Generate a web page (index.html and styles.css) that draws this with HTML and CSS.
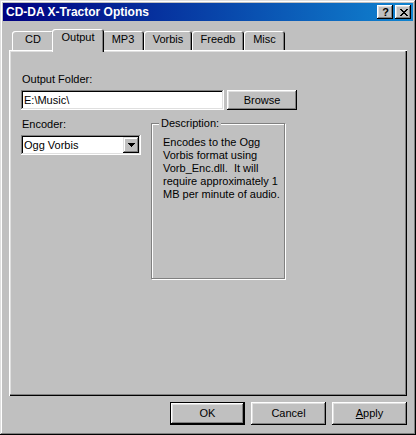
FILE: index.html
```html
<!DOCTYPE html>
<html>
<head>
<meta charset="utf-8">
<title>CD-DA X-Tractor Options</title>
<link rel="stylesheet" href="styles.css">
</head>
<body>
<div class="window">
  <div class="titlebar">
    <span class="title">CD-DA X-Tractor Options</span>
    <div class="caption-buttons">
      <div class="cap-btn help">?</div>
      <div class="cap-btn close">
        <svg width="8" height="7" viewBox="0 0 8 7">
          <path d="M0 0h2v1h1v1h2v-1h1v-1h2v1h-1v1h-1v1h-1v1h1v1h1v1h1v1h-2v-1h-1v-1h-2v1h-1v1h-2v-1h1v-1h1v-1h1v-1h-1v-1h-1v-1h-1z" fill="#000"/>
        </svg>
      </div>
    </div>
  </div>
  <div class="content">
    <div class="tabs">
      <div class="tab w-cd">CD</div>
      <div class="tab active w-output">Output</div>
      <div class="tab w-mp3">MP3</div>
      <div class="tab w-vorbis">Vorbis</div>
      <div class="tab w-freedb">Freedb</div>
      <div class="tab w-misc">Misc</div>
    </div>
    <div class="panel">
      <div class="label">Output Folder:</div>
      <div class="folder-row">
        <div class="field folder">E:\Music\</div>
        <div class="button browse">Browse</div>
      </div>
      <div class="cols">
        <div class="encoder-col">
          <div class="label encoder-label">Encoder:</div>
          <div class="field combo">
            <span class="combo-text">Ogg Vorbis</span>
            <div class="drop">
              <svg width="7" height="4" viewBox="0 0 7 4"><path d="M0 0h7v1h-1v1h-1v1h-1v1h-1v-1h-1v-1h-1v-1h-1z" fill="#000"/></svg>
            </div>
          </div>
        </div>
        <div class="group">
          <div class="legend">Description:</div>
          <p class="desc">Encodes to the Ogg<br>Vorbis format using<br>Vorb_Enc.dll.&nbsp; It will<br>require approximately 1<br>MB per minute of audio.</p>
        </div>
      </div>
    </div>
    <div class="footer">
      <div class="button default">OK</div>
      <div class="button">Cancel</div>
      <div class="button"><u>A</u>pply</div>
    </div>
  </div>
</div>
</body>
</html>
```

FILE: styles.css
```css
html, body {
  margin: 0;
  padding: 0;
  background: #c0c0c0;
}

body {
  font-family: "Liberation Sans", Arial, sans-serif;
  font-size: 11px;
  line-height: 13px;
  color: #000;
}

.window {
  width: 416px;
  height: 435px;
  box-sizing: border-box;
  padding: 3px;
  background: #c0c0c0;
  box-shadow: inset -1px -1px #000, inset 1px 1px #dfdfdf, inset -2px -2px #808080, inset 2px 2px #fff;
}

.titlebar {
  height: 18px;
  display: flex;
  align-items: center;
  justify-content: space-between;
  padding: 0 2px 0 3px;
  background: linear-gradient(90deg, #000080 0%, #1084d0 100%);
}

.title {
  color: #fff;
  font-weight: bold;
  font-size: 12px;
  line-height: 18px;
}

.caption-buttons {
  display: flex;
  gap: 2px;
}

.cap-btn {
  width: 16px;
  height: 14px;
  box-sizing: border-box;
  background: #c0c0c0;
  box-shadow: inset -1px -1px #000, inset 1px 1px #fff, inset -2px -2px #808080, inset 2px 2px #dfdfdf;
  display: flex;
  align-items: center;
  justify-content: center;
}

.cap-btn.help {
  font-weight: bold;
  font-size: 11px;
  line-height: 14px;
  padding-left: 1px;
}

.cap-btn.close svg {
  display: block;
  margin-left: 1px;
}

.content {
  padding: 8px 3px 0 6px;
}

.tabs {
  display: flex;
  align-items: flex-end;
  height: 21px;
  padding-left: 3px;
}

.tab {
  position: relative;
  box-sizing: border-box;
  height: 19px;
  padding-top: 2px;
  text-align: center;
  border-radius: 3px 3px 0 0;
  background: #c0c0c0;
  box-shadow: inset 1px 1px #fff, inset -1px 0 #000, inset -2px 0 #808080;
}

.tab.active {
  height: 23px;
  margin: 0 -2px -2px -2px;
  padding-top: 2px;
  z-index: 1;
}

.w-cd { width: 42px; }
.w-output { width: 52px; }
.w-mp3 { width: 42px; }
.w-vorbis { width: 48px; }
.w-freedb { width: 52px; }
.w-misc { width: 41px; }

.panel {
  width: 398px;
  height: 346px;
  box-sizing: border-box;
  padding: 23px 11px 0 12px;
  box-shadow: inset 1px 1px #fff, inset -1px -1px #000, inset -2px -2px #808080, inset 2px 2px #dfdfdf;
}

.label {
  margin-left: 1px;
}

.folder-row {
  display: flex;
  gap: 3px;
  margin-top: 4px;
}

.field {
  box-sizing: border-box;
  background: #fff;
  box-shadow: inset -1px -1px #fff, inset 1px 1px #808080, inset -2px -2px #dfdfdf, inset 2px 2px #000;
}

.folder {
  width: 203px;
  height: 20px;
  padding: 4px 0 0 3px;
}

.button {
  box-sizing: border-box;
  width: 75px;
  height: 23px;
  display: flex;
  align-items: center;
  justify-content: center;
  background: #c0c0c0;
  box-shadow: inset -1px -1px #000, inset 1px 1px #fff, inset -2px -2px #808080, inset 2px 2px #dfdfdf;
}

.button.browse {
  width: 70px;
  height: 20px;
}

.button.default {
  box-shadow: inset 0 0 0 1px #000, inset -2px -2px #000, inset 2px 2px #fff, inset -3px -3px #808080, inset 3px 3px #dfdfdf;
}

.cols {
  display: flex;
  align-items: flex-start;
  gap: 10px;
  margin-top: 8px;
}

.encoder-col {
  width: 120px;
}

.combo {
  width: 120px;
  height: 20px;
  margin-top: 4px;
  display: flex;
  align-items: center;
  justify-content: space-between;
  padding: 2px 2px 2px 3px;
}

.combo-text {
  line-height: 13px;
}

.drop {
  width: 16px;
  height: 16px;
  box-sizing: border-box;
  background: #c0c0c0;
  display: flex;
  align-items: center;
  justify-content: center;
  box-shadow: inset -1px -1px #000, inset 1px 1px #dfdfdf, inset -2px -2px #808080, inset 2px 2px #fff;
}

.drop svg {
  display: block;
}

.group {
  width: 134px;
  height: 156px;
  box-sizing: border-box;
  margin-top: 5px;
  border: 1px solid #808080;
  box-shadow: inset 1px 1px #fff, 1px 1px #fff;
}

.legend {
  display: block;
  width: max-content;
  margin: -7px 0 0 7px;
  padding: 0 2px;
  background: #c0c0c0;
}

.desc {
  margin: 6px 0 0 11px;
}

.footer {
  display: flex;
  justify-content: flex-end;
  gap: 6px;
  width: 398px;
  margin-top: 6px;
}
```
